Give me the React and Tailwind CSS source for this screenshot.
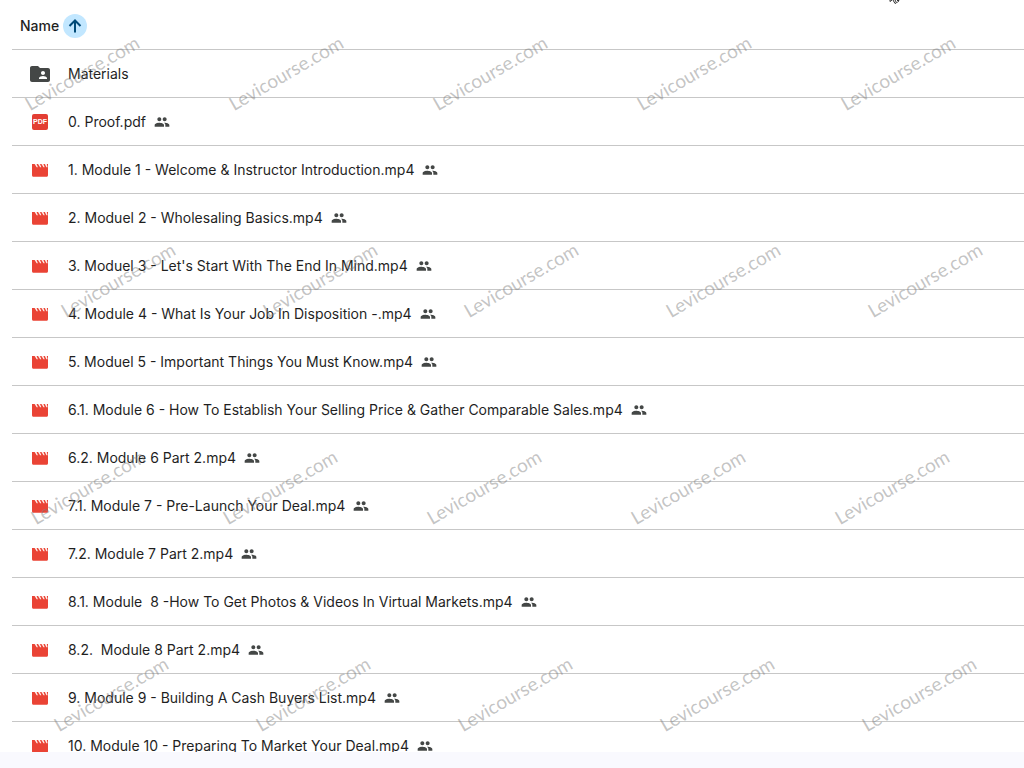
import { MdFolderShared, MdPeople } from 'react-icons/md';

const files = [
    { name: 'Materials', type: 'folder' },
    { name: '0. Proof.pdf', type: 'pdf' },
    { name: '1. Module 1 - Welcome & Instructor Introduction.mp4', type: 'video' },
    { name: '2. Moduel 2 - Wholesaling Basics.mp4', type: 'video' },
    { name: "3. Moduel 3 - Let's Start With The End In Mind.mp4", type: 'video' },
    { name: '4. Module 4 - What Is Your Job In Disposition -.mp4', type: 'video' },
    { name: '5. Moduel 5 - Important Things You Must Know.mp4', type: 'video' },
    { name: '6.1. Module 6 - How To Establish Your Selling Price & Gather Comparable Sales.mp4', type: 'video' },
    { name: '6.2. Module 6 Part 2.mp4', type: 'video' },
    { name: '7.1. Module 7 - Pre-Launch Your Deal.mp4', type: 'video' },
    { name: '7.2. Module 7 Part 2.mp4', type: 'video' },
    { name: '8.1. Module  8 -How To Get Photos & Videos In Virtual Markets.mp4', type: 'video' },
    { name: '8.2.  Module 8 Part 2.mp4', type: 'video' },
    { name: '9. Module 9 - Building A Cash Buyers List.mp4', type: 'video' },
    { name: '10. Module 10 - Preparing To Market Your Deal.mp4', type: 'video' },
];

// centre points of the watermark stamps, one entry per band
const stamps = [
    { y: 73, xs: [82, 286, 490, 694, 898] },
    { y: 280, xs: [118, 320, 521, 723, 925] },
    { y: 487, xs: [88, 280, 484, 688, 892] },
    { y: 694, xs: [111, 313, 515, 717, 919] },
];

function FileIcon({ type }) {
    if (type === 'folder') {
        return <MdFolderShared className="size-6 text-[#444746]" aria-hidden="true" />;
    }
    if (type === 'pdf') {
        return (
            <span className="flex size-4 items-center justify-center rounded-xs bg-[#e33e33] font-['Liberation_Sans',sans-serif] text-[7px] leading-none font-bold text-white">
                PDF
            </span>
        );
    }
    return (
        <svg viewBox="0 0 16 16" className="size-4" aria-hidden="true">
            <path fill="#ea4335" d="M0 2h16v11.200c0 .8-.6 1.500-1.400 1.500H1.400C.6 14.700 0 14 0 13.200z" />
            <path
                fill="#fdeeea"
                d="M2.600 2h2l1.300 3.200H4.700zM6 2h2l1.300 3.200H8.100zM9.400 2h2l1.300 3.200h-1.200zM12.800 2h2l.8 3.200h-1.200z"
            />
        </svg>
    );
}

function Watermark() {
    return (
        <div className="pointer-events-none absolute inset-0 overflow-hidden" aria-hidden="true">
            {stamps.map((band) =>
                band.xs.map((x) => (
                    <span
                        key={`${band.y}-${x}`}
                        className="absolute -translate-x-1/2 -translate-y-1/2 -rotate-30 font-['Lato',sans-serif] text-[19px] leading-6 font-normal whitespace-nowrap text-[#7c7c7c]/45"
                        style={{ left: x, top: band.y }}
                    >
                        Levicourse.com
                    </span>
                ))
            )}
        </div>
    );
}

export default function App() {
    return (
        <div className="relative flex h-screen flex-col overflow-hidden bg-[#f9f9fe] font-['Inter',sans-serif] text-sm text-[#1f1f1f]">
            <main className="min-h-0 flex-1 overflow-hidden bg-white pl-3">
                <table className="w-full border-collapse">
                    <thead>
                        <tr className="h-[49px] border-b border-[#c7c7c7]">
                            <th colSpan={2} className="p-0 pt-1 pl-2 text-left font-medium">
                                <button type="button" className="flex items-center gap-1">
                                    Name
                                    <span className="flex size-6 items-center justify-center rounded-full bg-[#c2e7ff] text-[#004a77]">
                                        <svg viewBox="0 0 16 16" className="size-4" aria-hidden="true">
                                            <path
                                                d="M8 14.500V3M2.500 8L8 2.500 13.500 8"
                                                fill="none"
                                                stroke="currentColor"
                                                strokeWidth="2"
                                            />
                                        </svg>
                                    </span>
                                </button>
                            </th>
                        </tr>
                    </thead>
                    <tbody>
                        {files.map((file) => (
                            <tr key={file.name} className="h-12 border-b border-[#c7c7c7]">
                                <td className="w-14 p-0 pt-px">
                                    <div className="flex justify-center">
                                        <FileIcon type={file.type} />
                                    </div>
                                </td>
                                <td className="p-0 pt-px">
                                    <div className="flex items-center gap-2">
                                        <span className="whitespace-pre">{file.name}</span>
                                        {file.type !== 'folder' && (
                                            <MdPeople className="size-4 text-[#444746]" aria-label="Shared" />
                                        )}
                                    </div>
                                </td>
                            </tr>
                        ))}
                    </tbody>
                </table>
            </main>
            <footer className="h-4 shrink-0" />
            <Watermark />
            {/* tip of the mouse pointer */}
            <svg viewBox="0 0 12 4" className="absolute top-0 left-[889px] h-1 w-3" aria-hidden="true">
                <path d="M1 0v1.500l2-1.500M4 0l2 3.500 1.500-.8L6 0M8 .5h2l-1.500 2" fill="none" stroke="#333" strokeWidth="1" />
            </svg>
        </div>
    );
}
